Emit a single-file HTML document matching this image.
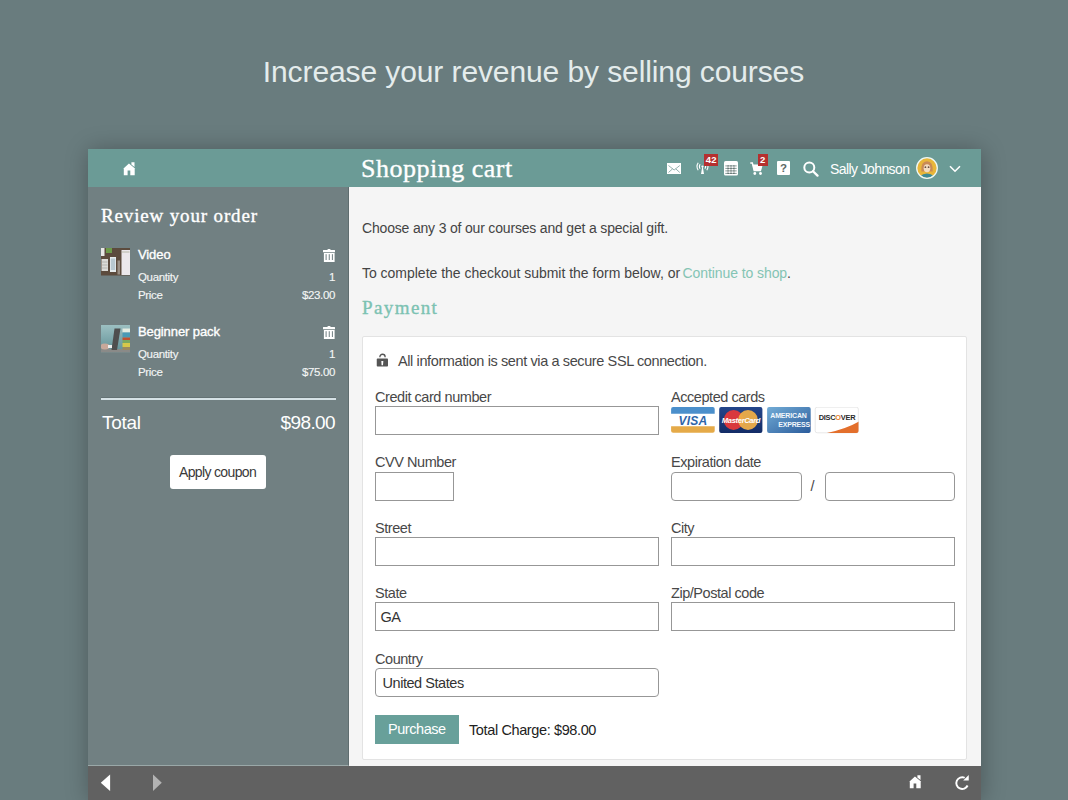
<!DOCTYPE html>
<html><head><meta charset="utf-8">
<style>
*{margin:0;padding:0;box-sizing:border-box}
html,body{width:1068px;height:800px;overflow:hidden;background:#697c7e;font-family:"Liberation Sans",sans-serif}
.a{position:absolute;white-space:nowrap;line-height:1}
#tagline{left:262.8px;top:57.3px;font-size:30px;color:#e4ecec;letter-spacing:-0.1px}
#win{position:absolute;left:88px;top:149px;width:892.5px;height:651px;box-shadow:1px 1px 22px rgba(0,0,0,.28)}
#hdr{position:absolute;left:0;top:0;width:892.5px;height:38px;background:#6b9b96}
#side{position:absolute;left:0;top:38px;width:261px;height:579px;background:#718082;border-right:1px solid #5f6d6f;border-bottom:1px solid #9aa8a8}
#main{position:absolute;left:261px;top:38px;width:631.5px;height:579px;background:#f5f5f5}
#bar{position:absolute;left:0;top:617px;width:892.5px;height:34px;background:#616161}
.slab{font-family:"Liberation Serif",serif;-webkit-text-stroke:0.35px currentColor}
.w{color:#fff}
.t14{font-size:14px;color:#444}
.lbl{font-size:14.5px;color:#484848;letter-spacing:-0.45px}
.inp{position:absolute;background:#fff;border:1px solid #979797}
#card{position:absolute;left:13px;top:149px;width:605px;height:424px;background:#fff;border:1px solid #e3e3e3;border-radius:2px}
.cc{position:absolute;top:69px;width:44px;height:26px;border-radius:2px;overflow:hidden}
.sq{font-size:11.5px;color:#f3f5f5;letter-spacing:-0.35px;-webkit-text-stroke:0.15px #f3f5f5}
.badge{position:absolute;background:#b5302f;color:#fff;font-weight:bold;font-size:9px;line-height:11px;text-align:center}
</style></head>
<body>
<div class="a" id="tagline">Increase your revenue by selling courses</div>
<div id="win">
  <div id="hdr">
    <svg class="a" style="left:34.5px;top:12.5px" width="13" height="14" viewBox="0 0 13 14"><path d="M5.95 1.45 L0.2 6.7 L0.8 6.7 L0.8 13.3 L4.6 13.3 L4.6 8.6 L7.3 8.6 L7.3 13.3 L11.7 13.3 L11.7 6.7 L12.3 6.7 Z" fill="#fff"/><path d="M8.4 0.35 L11.5 0.35 L11.5 5.1 L8.4 2.6 Z" fill="#fff"/></svg>
    <div class="a slab w" style="left:273px;top:7px;font-size:26px;letter-spacing:0.5px">Shopping cart</div>
    <svg class="a" style="left:578.8px;top:14px" width="14.3" height="11" viewBox="0 0 14.3 11"><rect x="0" y="0" width="14.3" height="11" fill="#fff"/><path d="M1.5 2.5 L7.15 7 L12.8 2.5 M1.5 9.5 L5.6 5.8 M12.8 9.5 L8.7 5.8" stroke="#7a9e9a" stroke-width="0.8" fill="none"/></svg>
    <svg class="a" style="left:607.5px;top:13px" width="14" height="13" viewBox="0 0 14 13"><path d="M6.3 4.5 L5 12 L8 12 L6.7 4.5 Z" fill="#fff"/><circle cx="6.5" cy="4.5" r="1.1" fill="#fff"/><path d="M4.1 2.3 Q2.7 4.5 4.1 6.7 M8.9 2.3 Q10.3 4.5 8.9 6.7 M2.2 0.8 Q-0.2 4.5 2.2 8.2 M10.8 0.8 Q13.2 4.5 10.8 8.2" stroke="#fff" stroke-width="1.1" fill="none"/></svg>
    <div class="badge" style="left:616px;top:5px;width:14.3px;height:11.8px;font-size:9.5px;line-height:12px">42</div>
    <svg class="a" style="left:636px;top:12px" width="14" height="14.6" viewBox="0 0 14 14.6"><rect x="0" y="0" width="14" height="14.6" rx="1.6" fill="#fff"/><g stroke="#55706c" stroke-width="0.7"><path d="M1.3 4.9 H12.7 M1.3 7.4 H12.7 M1.3 9.9 H12.7 M1.3 12.4 H12.7"/></g><g fill="#3e4e4c"><rect x="3.6" y="4.4" width="1" height="8.5"/><rect x="6.5" y="4.4" width="1" height="8.5"/><rect x="9.4" y="4.4" width="1" height="8.5"/></g><g fill="#fff"><rect x="3.6" y="5.4" width="1" height="1.5"/><rect x="6.5" y="5.4" width="1" height="1.5"/><rect x="9.4" y="5.4" width="1" height="1.5"/><rect x="3.6" y="7.9" width="1" height="1.5"/><rect x="6.5" y="7.9" width="1" height="1.5"/><rect x="9.4" y="7.9" width="1" height="1.5"/><rect x="3.6" y="10.4" width="1" height="1.5"/><rect x="6.5" y="10.4" width="1" height="1.5"/><rect x="9.4" y="10.4" width="1" height="1.5"/></g></svg>
    <svg class="a" style="left:662px;top:13px" width="13" height="13" viewBox="0 0 13 13"><path d="M0.3 0.9 L2.3 0.9 L4.2 8.6 L11 8.6" stroke="#fff" stroke-width="1.5" fill="none"/><path d="M2.4 2.6 L12.8 2.6 L11.2 8.6 L4 8.6 Z" fill="#fff"/><circle cx="4.8" cy="11.5" r="1.4" fill="#fff"/><circle cx="10.5" cy="11.5" r="1.4" fill="#fff"/></svg>
    <div class="badge" style="left:670px;top:5px;width:9.5px;height:12px;font-size:9.5px;line-height:12px">2</div>
    <div class="a" style="left:688.8px;top:12px;width:13px;height:14.2px;background:#fff;border-radius:1px"></div>
    <div class="a" style="left:692px;top:14.2px;font-size:11.5px;font-weight:bold;color:#5d6a67">?</div>
    <svg class="a" style="left:715px;top:11.5px" width="16" height="16" viewBox="0 0 16 16"><circle cx="6.3" cy="6.5" r="5" stroke="#fff" stroke-width="2" fill="none"/><path d="M10 10.2 L14.5 14.6" stroke="#fff" stroke-width="2.3" stroke-linecap="round"/></svg>
    <div class="a w" style="left:742px;top:13px;font-size:14px;letter-spacing:-0.6px">Sally Johnson</div>
    <svg class="a" style="left:827.5px;top:8.3px" width="22" height="22" viewBox="0 0 22 22"><defs><clipPath id="cl"><circle cx="11" cy="11" r="10"/></clipPath></defs><circle cx="11" cy="11" r="10.3" fill="#e8b63a"/><g clip-path="url(#cl)"><path d="M5.3 14.5 Q4.8 4.3 11 4.3 Q17.2 4.3 16.7 14.5 Z" fill="#c98a55"/><ellipse cx="11" cy="11.3" rx="3.3" ry="4" fill="#f3dcc0"/><circle cx="9.4" cy="10.2" r="0.9" fill="#6a5040"/><circle cx="12.6" cy="10.2" r="0.9" fill="#6a5040"/><path d="M3.5 19.5 Q11 13.5 18.5 19.5 L18.5 23 L3.5 23 Z" fill="#3d8a95"/></g><circle cx="11" cy="11" r="10.3" fill="none" stroke="#eef8f4" stroke-width="1.3"/></svg>
    <svg class="a" style="left:861px;top:16px" width="12" height="8" viewBox="0 0 12 8"><path d="M1 1.2 L6 6.2 L11 1.2" stroke="#fff" stroke-width="1.6" fill="none"/></svg>
  </div>
  <div id="side">
    <div class="a slab w" style="left:13px;top:19px;font-size:19px;letter-spacing:0.85px">Review your order</div>
    <!-- item 1 -->
    <svg class="a" style="left:13px;top:61.2px" width="29" height="27.5" viewBox="0 0 29 27.5"><rect width="29" height="27.5" fill="#5c4b3d"/><rect x="0" y="0" width="3.5" height="8" fill="#e8e8e6"/><rect x="5" y="0" width="6" height="5" fill="#6d9a4a"/><rect x="0.5" y="11" width="6.5" height="12" fill="#dcdcd8"/><path d="M1 14 H6.5 M1 17 H6.5 M1 20 H6.5" stroke="#9a9a94" stroke-width="0.6"/><rect x="9" y="9" width="6" height="15" fill="#e6ecee"/><rect x="9.8" y="10.5" width="4.4" height="11.5" fill="#b8c8d0"/><rect x="16.5" y="12.5" width="2.5" height="14" fill="#9a8f85"/><rect x="20.5" y="2" width="8.5" height="25" fill="#ece8ec"/><rect x="21" y="3.5" width="7.5" height="1" fill="#b8b8a8"/></svg>
    <div class="a w" style="left:50px;top:61px;font-size:13px;-webkit-text-stroke:0.35px #fff;letter-spacing:-0.1px">Video</div>
    <svg class="a" style="left:235px;top:62px" width="12" height="13" viewBox="0 0 12 13"><path d="M0 1.2 Q0 0.9 0.5 0.9 H4.3 Q4.6 0 5.3 0 H6.7 Q7.4 0 7.7 0.9 H11.5 Q12 0.9 12 1.4 V3.2 H0Z" fill="#fff"/><rect x="0.9" y="4" width="10.7" height="9" fill="#fff"/><path d="M3.1 5.2 V11 M6.25 5.2 V11 M9.4 5.2 V11" stroke="#6f7f81" stroke-width="1"/></svg>
    <div class="a sq" style="left:50px;top:85px">Quantity</div>
    <div class="a sq" style="right:13px;top:85px">1</div>
    <div class="a sq" style="left:50px;top:102.5px">Price</div>
    <div class="a sq" style="right:13px;top:102.5px">$23.00</div>
    <!-- item 2 -->
    <svg class="a" style="left:13px;top:138px" width="29" height="27.5" viewBox="0 0 29 27.5"><defs><linearGradient id="sky" x1="0" y1="0" x2="0" y2="1"><stop offset="0" stop-color="#9cc0c2"/><stop offset="1" stop-color="#5f8f95"/></linearGradient></defs><rect width="29" height="27.5" fill="url(#sky)"/><rect x="0" y="24" width="29" height="3.5" fill="#8a8a88"/><path d="M13.5 3.5 L19.5 3.5 L16 25 L10.5 25 Z" fill="#4e4e4e"/><rect x="21.5" y="3.5" width="7.5" height="4" fill="#e4ece2"/><rect x="21.5" y="7.5" width="7.5" height="5" fill="#4a9ab5"/><rect x="21.5" y="12.5" width="7.5" height="2.5" fill="#c0502f"/><rect x="21.5" y="15" width="7.5" height="3" fill="#7aa860"/><rect x="21.5" y="18" width="7.5" height="4" fill="#d6c84a"/><rect x="21.5" y="22" width="7.5" height="3" fill="#9a8a60"/><ellipse cx="4" cy="21.5" rx="4.5" ry="3" fill="#c8a89a"/><rect x="7" y="20" width="4" height="3" fill="#eeeeee"/></svg>
    <div class="a w" style="left:50px;top:138.4px;font-size:13px;-webkit-text-stroke:0.35px #fff;letter-spacing:-0.1px">Beginner pack</div>
    <svg class="a" style="left:235px;top:139px" width="12" height="13" viewBox="0 0 12 13"><path d="M0 1.2 Q0 0.9 0.5 0.9 H4.3 Q4.6 0 5.3 0 H6.7 Q7.4 0 7.7 0.9 H11.5 Q12 0.9 12 1.4 V3.2 H0Z" fill="#fff"/><rect x="0.9" y="4" width="10.7" height="9" fill="#fff"/><path d="M3.1 5.2 V11 M6.25 5.2 V11 M9.4 5.2 V11" stroke="#6f7f81" stroke-width="1"/></svg>
    <div class="a sq" style="left:50px;top:162.1px">Quantity</div>
    <div class="a sq" style="right:13px;top:162.1px">1</div>
    <div class="a sq" style="left:50px;top:179.6px">Price</div>
    <div class="a sq" style="right:13px;top:179.6px">$75.00</div>
    <div class="a" style="left:13px;top:211px;width:235px;height:2px;background:#d6e2e6;box-shadow:0 -1px 0 #647274"></div>
    <div class="a w" style="left:14px;top:226px;font-size:19px;letter-spacing:-0.3px">Total</div>
    <div class="a w" style="right:13px;top:226px;font-size:19px;letter-spacing:-0.6px">$98.00</div>
    <div class="a" style="left:82px;top:267.6px;width:96px;height:34px;background:#fff;border-radius:3px"></div><div class="a" style="left:91px;top:278.2px;font-size:14px;color:#3a3a3a;letter-spacing:-0.65px">Apply coupon</div>
  </div>
  <div id="main">
    <div class="a t14" style="left:13px;top:34px;letter-spacing:-0.18px">Choose any 3 of our courses and get a special gift.</div>
    <div class="a t14" style="left:13px;top:79px;letter-spacing:-0.02px">To complete the checkout submit the form below, or</div><div class="a t14" id="lnk" style="left:333.5px;top:79px;letter-spacing:-0.08px;color:#84c4b4">Continue to shop<span style="color:#444">.</span></div>
    <div class="a slab" style="left:13px;top:110.7px;font-size:19px;color:#7cc2b2;letter-spacing:1.4px">Payment</div>
    <div id="card">
      <svg class="a" style="left:13px;top:16px" width="13" height="14" viewBox="0 0 13 14"><path d="M3.9 4.3 V3.85 A2.6 2.6 0 0 1 9.1 3.85 V4.3" stroke="#555" stroke-width="1.3" fill="none"/><rect x="0.75" y="5.6" width="11.25" height="8" rx="0.8" fill="#555"/><path d="M5.3 8 H7.3 L7 12.2 H5.6Z" fill="#fff"/></svg>
      <div class="a lbl" style="left:35px;top:16.7px;letter-spacing:-0.39px">All information is sent via a secure SSL connection.</div>
      <div class="a lbl" style="left:12px;top:53px">Credit card number</div>
      <div class="inp" style="left:12px;top:69px;width:284px;height:29px"></div>
      <div class="a lbl" style="left:308px;top:53px">Accepted cards</div>
      <svg class="a" style="left:307.5px;top:70px" width="193" height="27" viewBox="0 0 193 27">
        <defs><linearGradient id="mcg" x1="0" y1="0" x2="0" y2="1"><stop offset="0" stop-color="#23458a"/><stop offset="1" stop-color="#132c66"/></linearGradient>
        <linearGradient id="axg" x1="0" y1="0" x2="1" y2="1"><stop offset="0" stop-color="#72acd6"/><stop offset="1" stop-color="#2b5c9c"/></linearGradient>
        <clipPath id="dcl"><rect x="144" y="0" width="43.5" height="26" rx="2"/></clipPath></defs>
        <rect x="0.1" y="0" width="43.6" height="26" rx="2" fill="#fff"/>
        <path d="M0.1 2 Q0.1 0 2.1 0 H41.7 Q43.7 0 43.7 2 V6.8 H0.1Z" fill="#4b8fcb"/>
        <path d="M0.1 19.2 H43.7 V23.7 Q43.7 25.7 41.7 25.7 H2.1 Q0.1 25.7 0.1 23.7Z" fill="#e5aa48"/>
        <text x="22" y="17.6" font-size="12" font-weight="bold" font-style="italic" fill="#2f65a8" text-anchor="middle" font-family="Liberation Sans" letter-spacing="0.2">VISA</text>
        <rect x="48.2" y="0" width="43.2" height="26" rx="2" fill="url(#mcg)"/>
        <circle cx="62.6" cy="13" r="9.9" fill="#d9383d"/>
        <circle cx="77" cy="13" r="9.9" fill="#eeae48" opacity="0.95"/>
        <text x="70" y="16.2" font-size="7.6" font-weight="bold" font-style="italic" fill="#fff" text-anchor="middle" font-family="Liberation Sans" letter-spacing="-0.35">MasterCard</text>
        <rect x="96.1" y="0" width="43.6" height="26" rx="2" fill="url(#axg)"/>
        <text x="117.5" y="11" font-size="7" font-weight="bold" fill="#f2f7fb" text-anchor="middle" font-family="Liberation Sans" letter-spacing="-0.15">AMERICAN</text>
        <text x="139" y="19.8" font-size="7" font-weight="bold" fill="#f2f7fb" text-anchor="end" font-family="Liberation Sans" letter-spacing="-0.2">EXPRESS</text>
        <rect x="144.2" y="0.2" width="43.1" height="25.6" rx="2" fill="#fff" stroke="#d8d8d8" stroke-width="0.6"/>
        <g clip-path="url(#dcl)"><path d="M155 26.2 Q175 22 188 14.5 V26.2Z" fill="#e36f2c"/></g>
        <text x="166" y="13" font-size="7.4" font-weight="bold" fill="#2a2a2a" text-anchor="middle" font-family="Liberation Sans" letter-spacing="-0.25">DISC<tspan fill="#e8832f">O</tspan>VER</text>
      </svg>
      <div class="a lbl" style="left:12px;top:118.3px">CVV Number</div>
      <div class="inp" style="left:12px;top:135px;width:79px;height:29px"></div>
      <div class="a lbl" style="left:308px;top:118.3px">Expiration date</div>
      <div class="inp" style="left:308px;top:135px;width:131px;height:29px;border-radius:4px"></div>
      <div class="a lbl" style="left:447.4px;top:141.7px">/</div>
      <div class="inp" style="left:462px;top:135px;width:130px;height:29px;border-radius:4px"></div>
      <div class="a lbl" style="left:12px;top:183.6px">Street</div>
      <div class="inp" style="left:12px;top:200px;width:284px;height:29px"></div>
      <div class="a lbl" style="left:308px;top:183.6px">City</div>
      <div class="inp" style="left:308px;top:200px;width:284px;height:29px"></div>
      <div class="a lbl" style="left:12px;top:249.3px">State</div>
      <div class="inp" style="left:12px;top:265px;width:284px;height:29px"></div>
      <div class="a lbl" style="left:17.5px;top:272.7px;color:#333">GA</div>
      <div class="a lbl" style="left:308px;top:249.3px">Zip/Postal code</div>
      <div class="inp" style="left:308px;top:265px;width:284px;height:29px"></div>
      <div class="a lbl" style="left:12px;top:314.6px">Country</div>
      <div class="inp" style="left:12px;top:331px;width:284px;height:29px;border-radius:4px"></div>
      <div class="a lbl" style="left:19.5px;top:338.6px;color:#333">United States</div>
      <div class="a" style="left:12px;top:378px;width:84px;height:29px;background:#68a09a"></div>
      <div class="a lbl" style="left:25px;top:385px;color:#fff">Purchase</div>
      <div class="a" style="left:106px;top:385.6px;font-size:14.5px;color:#222;letter-spacing:-0.38px">Total Charge: $98.00</div>
    </div>
  </div>
  <div id="bar">
    <svg class="a" style="left:12px;top:8px" width="11" height="18" viewBox="0 0 11 18"><path d="M10.1 0.5 L10.1 17 L0.8 8.75 Z" fill="#fff"/></svg>
    <svg class="a" style="left:64px;top:8px" width="11" height="18" viewBox="0 0 11 18"><path d="M1 0.5 L1 17 L9.8 8.75 Z" fill="#b3b3b3"/></svg>
    <svg class="a" style="left:820.5px;top:9.25px" width="13" height="14" viewBox="0 0 13 14"><path d="M5.95 1.45 L0.2 6.7 L0.8 6.7 L0.8 13.3 L4.6 13.3 L4.6 8.6 L7.3 8.6 L7.3 13.3 L11.7 13.3 L11.7 6.7 L12.3 6.7 Z" fill="#fff"/><path d="M8.4 0.35 L11.5 0.35 L11.5 5.1 L8.4 2.6 Z" fill="#fff"/></svg>
    <svg class="a" style="left:866px;top:8px" width="16" height="18" viewBox="0 0 16 18"><path d="M10.69 3.75 A5.9 5.9 0 1 0 13.6 11.5" stroke="#fff" stroke-width="1.9" fill="none"/><path d="M14.75 1 L14.75 6.6 L9.2 6.6 Z" fill="#fff"/></svg>
  </div>
</div>
</body></html>
